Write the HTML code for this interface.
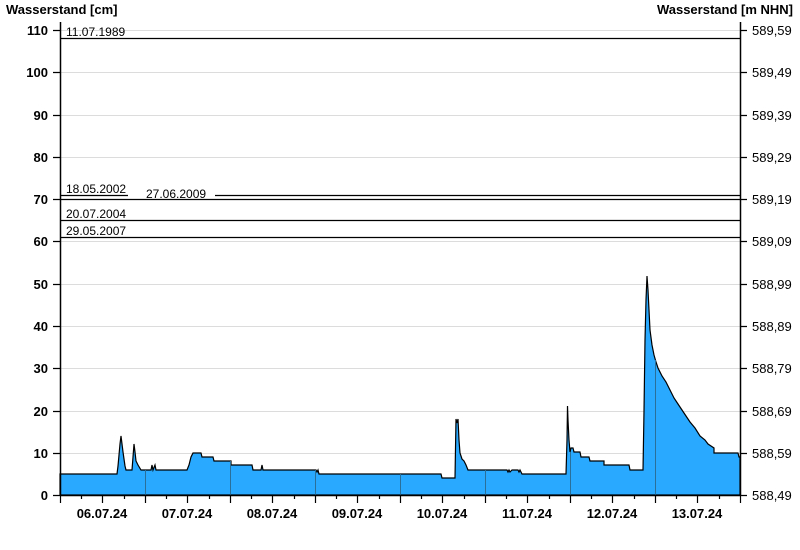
<!DOCTYPE html>
<html><head><meta charset="utf-8"><style>
html,body{margin:0;padding:0;background:#fff;}
svg{display:block;font-family:"Liberation Sans",Arial,sans-serif;}
</style></head><body>
<svg width="800" height="550" viewBox="0 0 800 550">
<g stroke="#dcdcdc" stroke-width="1">
<line x1="60" y1="30.5" x2="740" y2="30.5"/>
<line x1="60" y1="72.5" x2="740" y2="72.5"/>
<line x1="60" y1="115.5" x2="740" y2="115.5"/>
<line x1="60" y1="157.5" x2="740" y2="157.5"/>
<line x1="60" y1="199.5" x2="740" y2="199.5"/>
<line x1="60" y1="241.5" x2="740" y2="241.5"/>
<line x1="60" y1="284.5" x2="740" y2="284.5"/>
<line x1="60" y1="326.5" x2="740" y2="326.5"/>
<line x1="60" y1="368.5" x2="740" y2="368.5"/>
<line x1="60" y1="411.5" x2="740" y2="411.5"/>
<line x1="60" y1="453.5" x2="740" y2="453.5"/>
</g>
<path fill="#29a9ff" stroke="#000" stroke-width="1.2" stroke-linejoin="miter" d="M60,495 L60,474 L117,474 L118,466 L120,444 L121,436 L122,444 L123,452 L125,466 L126,470 L132,470 L133,457 L134,444 L135,452 L136,461 L138,465 L141,470 L151,470 L152,465 L153,470 L155,465 L156,470 L187,470 L189,465 L191,457 L193,453 L201,453 L202,457 L213,457 L214,461 L231,461 L231,465 L252,465 L253,470 L261,470 L262,465 L263,470 L316,470 L317,472 L318,470 L319,474 L441,474 L442,478 L455,478 L456,419 L457,423 L458,419 L459,440 L460,453 L462,459 L464,461 L466,465 L468,470 L507,470 L508,472 L509,470 L510,472 L512,470 L518,470 L519,472 L520,470 L522,474 L566,474 L567,440 L567.5,406 L568,420 L569,440 L570,452 L571,448 L573,448 L574,452 L580,452 L581,457 L589,457 L590,461 L604,461 L604,465 L629,465 L630,470 L643,470 L644,411 L645,340 L646,300 L647,276 L648,290 L649,310 L650,330 L652,345 L654,355 L656,362 L658,368 L662,376 L666,382 L670,390 L674,398 L678,404 L682,410 L686,416 L690,422 L695,428 L700,436 L705,440 L708,444 L714,448 L714,453 L738,453 L739,457 L740,457 L740,495 Z"/>
<g stroke="#2a6f99" stroke-width="1">
<line x1="145.5" y1="470" x2="145.5" y2="495"/>
<line x1="230.5" y1="461" x2="230.5" y2="495"/>
<line x1="315.5" y1="470" x2="315.5" y2="495"/>
<line x1="400.5" y1="474" x2="400.5" y2="495"/>
<line x1="485.5" y1="470" x2="485.5" y2="495"/>
<line x1="570.5" y1="452" x2="570.5" y2="495"/>
<line x1="655.5" y1="360" x2="655.5" y2="495"/>
</g>
<g stroke="#000" stroke-width="1.2">
<line x1="60" y1="38.5" x2="740" y2="38.5"/>
<line x1="60" y1="195.5" x2="128" y2="195.5"/>
<line x1="215" y1="195.5" x2="740" y2="195.5"/>
<line x1="60" y1="199.5" x2="740" y2="199.5"/>
<line x1="60" y1="220.5" x2="740" y2="220.5"/>
<line x1="60" y1="237.5" x2="740" y2="237.5"/>
</g>
<g font-size="12" fill="#000">
<text x="66" y="36">11.07.1989</text>
<text x="66" y="193">18.05.2002</text>
<text x="146" y="198">27.06.2009</text>
<text x="66" y="218">20.07.2004</text>
<text x="66" y="235">29.05.2007</text>
</g>
<g stroke="#000" stroke-width="1.5">
<line x1="60.5" y1="22" x2="60.5" y2="496"/>
<line x1="740.5" y1="22" x2="740.5" y2="496"/>
<line x1="60" y1="495.5" x2="741" y2="495.5"/>
</g>
<g stroke="#000" stroke-width="1.2">
<path d="M53,30.5h7M53,72.5h7M53,115.5h7M53,157.5h7M53,199.5h7M53,241.5h7M53,284.5h7M53,326.5h7M53,368.5h7M53,411.5h7M53,453.5h7M53,495.5h7"/>
<path d="M740,30.5h7M740,72.5h7M740,115.5h7M740,157.5h7M740,199.5h7M740,241.5h7M740,284.5h7M740,326.5h7M740,368.5h7M740,411.5h7M740,453.5h7M740,495.5h7"/>
<path d="M60.5,495v8M81.5,495v4M102.5,495v8M124.5,495v4M145.5,495v8M166.5,495v4M187.5,495v8M209.5,495v4M230.5,495v8M251.5,495v4M272.5,495v8M294.5,495v4M315.5,495v8M336.5,495v4M357.5,495v8M379.5,495v4M400.5,495v8M421.5,495v4M442.5,495v8M464.5,495v4M485.5,495v8M506.5,495v4M527.5,495v8M549.5,495v4M570.5,495v8M591.5,495v4M612.5,495v8M634.5,495v4M655.5,495v8M676.5,495v4M697.5,495v8M719.5,495v4M740.5,495v8"/>
</g>
<g font-size="13" font-weight="bold" text-anchor="end" fill="#000">
<text x="48" y="35">110</text>
<text x="48" y="77">100</text>
<text x="48" y="120">90</text>
<text x="48" y="162">80</text>
<text x="48" y="204">70</text>
<text x="48" y="246">60</text>
<text x="48" y="289">50</text>
<text x="48" y="331">40</text>
<text x="48" y="373">30</text>
<text x="48" y="416">20</text>
<text x="48" y="458">10</text>
<text x="48" y="500">0</text>
</g>
<g font-size="13" fill="#000">
<text x="752" y="35">589,59</text>
<text x="752" y="77">589,49</text>
<text x="752" y="120">589,39</text>
<text x="752" y="162">589,29</text>
<text x="752" y="204">589,19</text>
<text x="752" y="246">589,09</text>
<text x="752" y="289">588,99</text>
<text x="752" y="331">588,89</text>
<text x="752" y="373">588,79</text>
<text x="752" y="416">588,69</text>
<text x="752" y="458">588,59</text>
<text x="752" y="500">588,49</text>
</g>
<g font-size="13" font-weight="bold" text-anchor="middle" fill="#000">
<text x="102" y="518">06.07.24</text>
<text x="187" y="518">07.07.24</text>
<text x="272" y="518">08.07.24</text>
<text x="357" y="518">09.07.24</text>
<text x="442" y="518">10.07.24</text>
<text x="527" y="518">11.07.24</text>
<text x="612" y="518">12.07.24</text>
<text x="697" y="518">13.07.24</text>
</g>
<text x="6" y="14" font-size="13" font-weight="bold">Wasserstand [cm]</text>
<text x="793" y="14" font-size="13" font-weight="bold" text-anchor="end">Wasserstand [m NHN]</text>
</svg>
</body></html>
